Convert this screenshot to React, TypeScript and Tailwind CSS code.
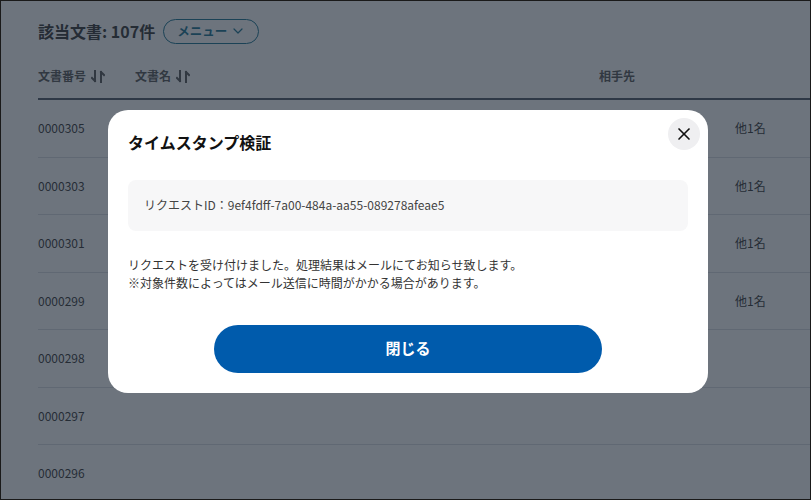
import { X, ChevronDown } from "lucide-react";

const rows = [
  { no: "0000305", other: "他1名" },
  { no: "0000303", other: "他1名" },
  { no: "0000301", other: "他1名" },
  { no: "0000299", other: "他1名" },
  { no: "0000298", other: "" },
  { no: "0000297", other: "" },
  { no: "0000296", other: "" },
];

function SortIcon() {
  return (
    <svg width="14" height="13" viewBox="0 0 14 13" fill="none" stroke="currentColor" strokeWidth="2" strokeLinecap="square">
      <path d="M4 1v10M4 11L1 8" />
      <path d="M10 12V2M10 2l3 3" />
    </svg>
  );
}

export default function App() {
  return (
    <div
      className="relative w-[811px] h-[500px] overflow-hidden border border-[#1a1a1a] bg-white text-[#333]"
      style={{ fontFamily: '"Noto Sans CJK JP", "Noto Sans", sans-serif' }}
    >
      {/* page behind the dialog */}
      <div className="pl-[37px] pt-[17px]">
        <div className="flex items-center gap-2 h-[26px]">
          <h1 className="text-[16px] font-bold leading-none">該当文書: 107件</h1>
          <button className="flex items-center gap-[3px] h-[25px] pl-[13px] pr-[12px] rounded-full border border-[#14708f] text-[#14708f] text-[12.5px] font-bold">
            メニュー
            <ChevronDown size={16} strokeWidth={1.8} />
          </button>
        </div>

        <div className="mt-[18px] flex items-start pt-[5px] h-[38px] border-b-2 border-[#4b5563] text-[12px] font-bold text-[#555]">
          <div className="w-[97px] flex items-center gap-[5px]">
            文書番号 <SortIcon />
          </div>
          <div className="w-[464px] flex items-center gap-[5px]">
            文書名 <SortIcon />
          </div>
          <div>相手先</div>
        </div>

        {rows.map((r) => (
          <div key={r.no} className="flex items-center h-[57.5px] border-b border-[#d9dde3] text-[12px] text-[#333]">
            <div className="w-[697px]">{r.no}</div>
            <div>{r.other}</div>
          </div>
        ))}
      </div>

      {/* overlay */}
      <div className="absolute inset-0 bg-[#1f2937]/65 flex items-center justify-center">
        <div className="relative w-[600px] ml-[5px] mt-[2px] bg-white rounded-[20px] px-5 pt-[16px] pb-[20px]">
          <button className="absolute top-[8px] right-[8px] w-[32px] h-[32px] rounded-full bg-[#efeff1] flex items-center justify-center text-[#111]">
            <X size={20} strokeWidth={2} />
          </button>

          <h2 className="text-[16px] font-bold text-[#111] h-[32px] flex items-center pt-[1px]">タイムスタンプ検証</h2>

          <div className="mt-[22px] h-[51px] flex items-center px-4 rounded-lg bg-[#f7f7f8] text-[12px] text-[#444]">
            リクエストID：9ef4fdff-7a00-484a-aa55-089278afeae5
          </div>

          <p className="mt-[25px] text-[12px] leading-[18px] text-[#333]">
            リクエストを受け付けました。処理結果はメールにてお知らせ致します。
            <br />
            ※対象件数によってはメール送信に時間がかかる場合があります。
          </p>

          <div className="mt-[33px] flex justify-center">
            <button className="w-[388px] h-[48px] rounded-full bg-[#005bac] text-white text-[15px] font-bold">
              閉じる
            </button>
          </div>
        </div>
      </div>
    </div>
  );
}
